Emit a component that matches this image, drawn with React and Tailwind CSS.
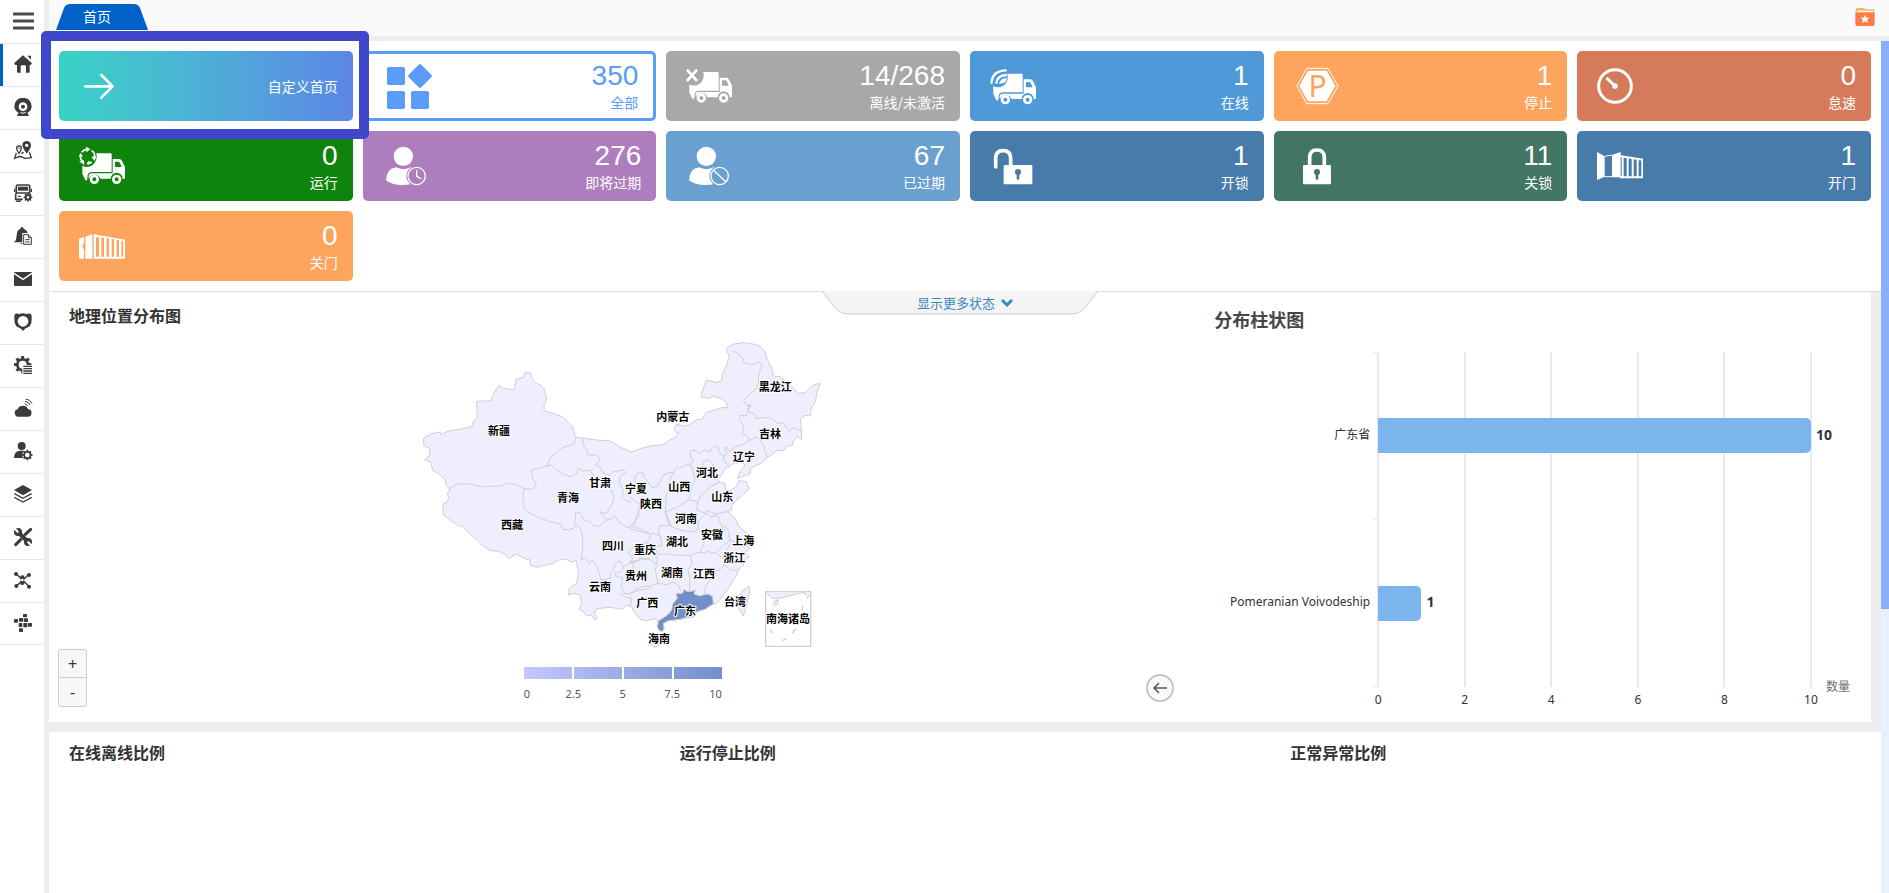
import React from 'react';

const DARK = '#3b3b3b';

// ---------- sidebar icons, 54 x 54 grid ----------

function Gear({ cx, cy, r, hole, color = DARK, teeth = 8 }) {
  const step = 360 / teeth;
  return (
    <g>
      <circle cx={cx} cy={cy} r={(r + hole) / 2} fill="none" stroke={color} strokeWidth={r - hole} />
      {Array.from({ length: teeth }, (_, i) => (
        <rect
          key={i}
          x={cx - r * 0.22}
          y={cy - r * 1.3}
          width={r * 0.44}
          height={r * 0.5}
          fill={color}
          transform={`rotate(${i * step} ${cx} ${cy})`}
        />
      ))}
    </g>
  );
}

const menuItems = [
  {
    name: '首页',
    icon: (
      <g fill={DARK}>
        <path d="M27 1 L54 25 L50 30 H47 V50 Q47 53 44 53 H36 V34 Q36 31 33 31 H23 Q20 31 20 34 V53 H12 Q9 53 9 50 V30 H4 L0 25Z" />
        <path d="M40 2 H51 V14Z" />
      </g>
    ),
  },
  {
    name: '视频',
    icon: (
      <g fill={DARK}>
        <path fillRule="evenodd" d="M27 0 A24 24 0 0 1 40 45 L44 50 V54 H10 V50 L14 45 A24 24 0 0 1 27 0Z M27 13 A13 13 0 1 0 27 39 A13 13 0 1 0 27 13Z" />
        <circle cx="27" cy="26" r="6" />
        <path d="M19 43 Q27 49 35 43" stroke="#fff" strokeWidth="3" fill="none" />
      </g>
    ),
  },
  {
    name: '地图',
    icon: (
      <g>
        <path d="M38 0 A13 13 0 0 1 51 13 Q50 24 38 38 Q27 24 25 13 A13 13 0 0 1 38 0Z" fill={DARK} />
        <circle cx="38" cy="13" r="5" fill="#fff" />
        <path d="M15 15 A7 7 0 0 1 22 22 Q21 29 15 37 Q9 29 8 22 A7 7 0 0 1 15 15Z" fill="none" stroke={DARK} strokeWidth="4" />
        <circle cx="15" cy="22" r="2" fill={DARK} />
        <path d="M7 36 L2 52 L17 46 L34 52 L52 50 L46 34 M22 38 L29 34" fill="none" stroke={DARK} strokeWidth="4" />
      </g>
    ),
  },
  {
    name: '车辆',
    icon: (
      <g>
        <path d="M7 30 V7 Q7 3 11 3 H43 Q47 3 47 7 V28 M5 30 V46 H26" fill="none" stroke={DARK} strokeWidth="5" />
        <rect x="12" y="8" width="30" height="12" fill={DARK} />
        <path d="M5 27 H48 M2 14 V24 M52 14 V24 M12 37 H20 M9 48 V52 H18 V48" stroke={DARK} strokeWidth="4" fill="none" />
        <Gear cx={42} cy={40} r={10} hole={4} />
      </g>
    ),
  },
  {
    name: '报警',
    icon: (
      <g>
        <path d="M19 5 Q20 0 24 0 Q28 0 29 5 Q42 10 42 26 V46 H0 Q8 39 8 26 Q8 10 19 5Z M18 48 H30 Q24 55 18 48Z" fill={DARK} />
        <path d="M27 20 H44 L54 30 V54 H27Z" fill="#fff" stroke="#fff" strokeWidth="4" />
        <path d="M29 23 H43 L52 32 V52 H29Z M43 23 V32 H52 M34 38 H47 M34 45 H47" fill="#fff" stroke={DARK} strokeWidth="3" />
      </g>
    ),
  },
  {
    name: '消息',
    icon: (
      <g>
        <rect x="0" y="6" width="54" height="42" rx="3" fill={DARK} />
        <path d="M0 10 L27 28 L54 10" fill="none" stroke="#fff" strokeWidth="4" />
      </g>
    ),
  },
  {
    name: '围栏',
    icon: (
      <g>
        <path d="M5 2 Q10 0 16 3 Q27 -2 38 3 Q44 0 49 2 Q54 4 53 17 Q54 30 47 40 L33 47 L27 54 L21 47 L7 40 Q0 30 1 17 Q0 4 5 2Z" fill={DARK} />
        <circle cx="27" cy="25" r="16" fill="#fff" />
      </g>
    ),
  },
  {
    name: '设置',
    icon: (
      <g>
        <Gear cx={26} cy={26} r={20} hole={12} />
        <rect x="25" y="27" width="30" height="28" fill="#fff" />
        <path d="M28 31 H54 M28 38 H54 M28 45 H54 M28 52 H54" stroke={DARK} strokeWidth="4" />
      </g>
    ),
  },
  {
    name: '云服务',
    icon: (
      <g>
        <path d="M16 53 A11 11 0 0 1 11 31 Q14 20 27 20 Q38 20 42 30 A11 11 0 0 1 40 53Z" fill={DARK} />
        <path d="M32 14 Q38 15 40 21 M33 7 Q44 8 48 18 M35 1 Q49 1 54 14" fill="none" stroke={DARK} strokeWidth="3" />
      </g>
    ),
  },
  {
    name: '用户',
    icon: (
      <g>
        <circle cx="23" cy="12" r="12" fill={DARK} />
        <path d="M0 48 Q0 28 16 26 H30 Q22 36 27 48Z" fill={DARK} />
        <Gear cx={40} cy={39} r={12} hole={7} />
      </g>
    ),
  },
  {
    name: '图层',
    icon: (
      <g>
        <path d="M27 0 L54 15 L27 31 L0 15Z" fill={DARK} />
        <path d="M1 26 L27 40 L53 26 M1 37 L27 51 L53 37" fill="none" stroke={DARK} strokeWidth="4" />
      </g>
    ),
  },
  {
    name: '工具',
    icon: (
      <g>
        <path d="M50 4 L34 19 M20 35 L5 50" stroke={DARK} strokeWidth="9" strokeLinecap="round" />
        <path d="M15 15 L39 39" stroke={DARK} strokeWidth="13" />
        <circle cx="12" cy="12" r="12" fill={DARK} />
        <circle cx="42" cy="42" r="12" fill={DARK} />
        <path d="M0 -1 L11 11 M54 55 L43 43" stroke="#fff" strokeWidth="7" strokeLinecap="round" />
      </g>
    ),
  },
  {
    name: '网络',
    icon: (
      <g fill={DARK}>
        <path d="M6 8 L45 46 M45 10 L7 46 M25 18 V38" stroke={DARK} strokeWidth="4" />
        <circle cx="6" cy="9" r="6" />
        <circle cx="45" cy="12" r="6" />
        <circle cx="7" cy="45" r="6" />
        <circle cx="45" cy="47" r="6" />
        <circle cx="25" cy="20" r="7" />
        <circle cx="25" cy="35" r="7" />
        <circle cx="25" cy="27" r="4" fill="#fff" />
      </g>
    ),
  },
  {
    name: '应用',
    icon: (
      <g fill={DARK}>
        <rect x="27" y="0" width="12" height="10" rx="2" />
        <rect x="15" y="12" width="13" height="11" rx="2" />
        <rect x="30" y="13" width="12" height="11" rx="2" />
        <rect x="0" y="15" width="12" height="11" rx="2" />
        <rect x="14" y="27" width="11" height="12" rx="2" />
        <rect x="28" y="27" width="12" height="13" rx="2" />
        <rect x="42" y="27" width="12" height="11" rx="2" />
        <rect x="15" y="43" width="12" height="11" rx="2" />
      </g>
    ),
  },
];

// ---------- card icons, 138 x 138 grid ----------

function Truck({ dy = 0, children }) {
  return (
    <g fill="#fff">
      <g transform={`translate(0 ${dy})`}>
        <path d="M52 31 H95 Q98 31 98 34 V87 H40 Q28 87 26 97 L24 113 Q17 112 16 105 L10 92 V68 Q24 76 40 67 Q57 54 52 31Z" />
        <path
          fillRule="evenodd"
          d="M29 106 V98 Q30 91 38 91 H101 V48 H122 Q127 49 129 54 L138 72 V107 H131 A18 18 0 0 0 95 107 H64 A18 18 0 0 0 30 107Z M108 56 H120 L127 68 V72 H108Z"
        />
        <circle cx="46" cy="109" r="10" fill="none" stroke="#fff" strokeWidth="8" />
        <circle cx="113" cy="109" r="10" fill="none" stroke="#fff" strokeWidth="8" />
      </g>
      {children}
    </g>
  );
}

function Person({ bg, children }) {
  return (
    <g transform="translate(9 0)">
      <circle cx="52" cy="40" r="29" fill="#fff" />
      <path d="M0 112 Q2 76 30 73 Q52 84 74 73 Q96 76 100 112 Q80 126 50 126 Q16 126 0 112Z" fill="#fff" />
      <circle cx="92" cy="99" r="31" fill={bg} />
      <circle cx="92" cy="99" r="26" fill={bg} stroke="#fff" strokeWidth="4" />
      {children}
    </g>
  );
}

function Keyhole({ x, color }) {
  return (
    <g fill={color}>
      <circle cx={x} cy="87" r="9" />
      <rect x={x - 4} y="90" width="8" height="20" rx="3" />
    </g>
  );
}

const icons = {
  arrow: (
    <path d="M19 70 H100 M67 36 L101 70 L67 104" fill="none" stroke="#fff" strokeWidth="8" strokeLinecap="round" strokeLinejoin="round" />
  ),
  all: (
    <g fill="#5b9cf8">
      <rect x="3" y="12" width="54" height="54" rx="5" />
      <path d="M98 5 Q102 1 106 5 L136 35 Q139 39 136 43 L106 73 Q102 77 98 73 L68 43 Q65 39 68 35Z" />
      <rect x="3" y="84" width="54" height="54" rx="5" />
      <rect x="75" y="84" width="54" height="54" rx="5" />
    </g>
  ),
  offline: (
    <Truck dy={-4}>
      <path d="M3 20 L33 54 M33 20 L3 54" stroke="#fff" strokeWidth="8" />
    </Truck>
  ),
  online: (
    <Truck dy={1}>
      <path d="M4 62 Q6 22 50 22 M19 62 Q20 37 50 36" fill="none" stroke="#fff" strokeWidth="7" />
      <path d="M27 62 Q32 45 50 46 Q50 62 27 62Z" />
    </Truck>
  ),
  parking: (
    <g>
      <path d="M38 16 H102 L132 69 L102 122 H38 L9 69Z" fill="none" stroke="#fff" strokeWidth="3" />
      <path d="M42 23 H98 L124 69 L98 115 H42 L16 69Z" fill="#fff" />
      <text x="71" y="101" textAnchor="middle" fontSize="90" fill="#fda55f" fontFamily="Noto Sans, sans-serif">P</text>
    </g>
  ),
  idle: (
    <g stroke="#fff" strokeLinecap="round">
      <circle cx="54" cy="69" r="49" fill="none" strokeWidth="9" />
      <path d="M31 47 L54 69" strokeWidth="9" />
      <circle cx="54" cy="69" r="6" fill="#fff" strokeWidth="5" />
    </g>
  ),
  moving: (
    <Truck>
      <g fill="none" stroke="#fff" strokeWidth="5">
        <path d="M8 28 A21 21 0 0 1 24 19 M38 22 A21 21 0 0 1 46 44 M38 57 A21 21 0 0 1 24 61 M10 55 A21 21 0 0 1 4 38" />
      </g>
      <path d="M20 11 L34 18 L23 28Z M37 42 L52 40 L47 54Z M27 53 L26 66 L38 60Z M0 55 L15 52 L16 66Z M0 42 L4 30 L12 40Z" />
    </Truck>
  ),
  expiring: (
    <Person bg="#ae7dbe">
      <path d="M92 82 V100 L105 107" fill="none" stroke="#fff" strokeWidth="4" />
    </Person>
  ),
  expired: (
    <Person bg="#69a0d0">
      <path d="M73 81 L111 117" stroke="#fff" strokeWidth="4" />
    </Person>
  ),
  unlock: (
    <g>
      <path d="M17 72 V46 Q17 23 39 23 Q62 23 62 46 V68" fill="none" stroke="#fff" strokeWidth="11" strokeLinecap="round" />
      <rect x="41" y="66" width="86" height="58" rx="3" fill="#fff" />
      <Keyhole x={84} color="#477baa" />
    </g>
  ),
  lock: (
    <g>
      <path d="M47 70 V44 Q47 21 69 21 Q91 21 91 44 V70" fill="none" stroke="#fff" strokeWidth="11" />
      <rect x="27" y="66" width="84" height="58" rx="3" fill="#fff" />
      <Keyhole x={69} color="#427566" />
    </g>
  ),
  doorOpen: (
    <g>
      <path d="M0 27 L23 40 V101 L0 111Z M45 36 L71 27 V103 H45Z" fill="#fff" />
      <path d="M23 40 L45 36 M23 101 H50" stroke="#fff" strokeWidth="3" />
      <path d="M68 39 L137 50 V103 H68 M77 42 V103 M92 44 V103 M107 46 V103 M122 48 V103 M136 50 V103" fill="none" stroke="#fff" strokeWidth="6" />
    </g>
  ),
  doorClosed: (
    <g>
      <path d="M0 47 L15 42 V60 L11 64 V76 L15 79 V107 H0Z M19 41 L40 34 V107 H19Z" fill="#fff" />
      <path
        fillRule="evenodd"
        d="M44 34 L138 50 V107 H44Z M51 43 H60 V101 H51Z M67 44 H75 V101 H67Z M83 46 H90 V101 H83Z M98 48 H105 V101 H98Z M113 51 H120 V101 H113Z M127 53 H132 V101 H127Z"
        fill="#fff"
      />
    </g>
  ),
};

const cards = [
  { label: '自定义首页', icon: 'arrow', style: 'bg-linear-to-r from-[#37d3c5] to-[#5b86e5] text-white', featured: true },
  { value: '350', label: '全部', icon: 'all', style: 'border-3 border-[#5b9cf8] bg-white text-[#5b9cf8]' },
  { value: '14/268', label: '离线/未激活', icon: 'offline', style: 'bg-[#a8a8a8] text-white' },
  { value: '1', label: '在线', icon: 'online', style: 'bg-[#4f99d9] text-white' },
  { value: '1', label: '停止', icon: 'parking', style: 'bg-[#fda55f] text-white' },
  { value: '0', label: '怠速', icon: 'idle', style: 'bg-[#d57a5b] text-white' },
  { value: '0', label: '运行', icon: 'moving', style: 'bg-[#0e840c] text-white' },
  { value: '276', label: '即将过期', icon: 'expiring', style: 'bg-[#ae7dbe] text-white' },
  { value: '67', label: '已过期', icon: 'expired', style: 'bg-[#69a0d0] text-white' },
  { value: '1', label: '开锁', icon: 'unlock', style: 'bg-[#477baa] text-white' },
  { value: '11', label: '关锁', icon: 'lock', style: 'bg-[#427566] text-white' },
  { value: '1', label: '开门', icon: 'doorOpen', style: 'bg-[#477baa] text-white' },
  { value: '0', label: '关门', icon: 'doorClosed', style: 'bg-[#fda55f] text-white' },
];

function StatusCard({ card }) {
  return (
    <div className="relative">
      <button className={`flex h-[70px] w-full items-center justify-between rounded-[5px] pl-5 pr-[15px] ${card.style}`}>
        <svg viewBox="0 0 138 138" className="size-[46px]" aria-hidden="true">
          {icons[card.icon]}
        </svg>
        <span className="flex flex-col items-end">
          {card.value && <span className="font-['Liberation_Sans',sans-serif] text-[28px] leading-8">{card.value}</span>}
          <span className="text-sm leading-5">{card.label}</span>
        </span>
      </button>
      {card.featured && (
        <div className="pointer-events-none absolute -bottom-[18px] -left-[18px] -right-4 -top-5 z-10 rounded-[5px] border-10 border-[#3f48cc]" />
      )}
    </div>
  );
}

// ---------- map ----------

const outline =
  'M346 126 L362 128 364 142 372 152 380 160 392 166 402 176 404 190 410 200 408 214 402 226 402 242 416 246 440 254 456 260 468 270 476 280 488 290 492 306 498 322 518 324 560 330 596 332 614 340 630 352 648 358 664 366 690 356 720 348 760 344 776 332 790 325 803 314 805 308 796 306 792 296 800 282 820 288 838 284 850 276 864 268 876 268 890 246 915 240 940 232 952 234 948 215 932 206 910 198 895 206 872 200 880 175 890 150 922 158 936 150 936 135 950 105 958 78 950 62 950 55 970 42 1000 38 1030 42 1050 48 1065 66 1070 84 1085 115 1090 138 1110 140 1132 160 1150 175 1165 190 1185 188 1210 165 1230 160 1222 185 1216 215 1204 235 1202 258 1185 256 1170 268 1172 280 1175 305 1174 330 1164 320 1150 332 1148 345 1130 350 1122 362 1100 362 1085 375 1072 382 1055 400 1040 405 1022 415 1020 432 1000 438 982 445 990 425 1005 405 995 395 970 400 958 410 945 415 932 440 918 445 930 456 945 462 947 478 960 482 980 470 985 452 1010 455 1018 478 1000 492 985 505 965 525 965 540 948 545 960 550 975 565 988 590 1010 610 1028 632 1015 645 1000 640 1020 655 1005 668 1018 680 1004 690 1000 705 985 720 978 738 965 760 945 790 920 820 910 822 885 838 860 845 850 860 810 868 775 872 760 880 762 895 754 905 742 890 744 876 735 866 710 872 690 868 676 850 664 830 650 826 636 838 600 832 560 836 554 850 562 866 552 868 545 855 530 858 520 845 508 838 515 820 510 795 492 790 475 795 478 775 500 760 505 730 500 700 498 690 486 698 470 688 450 688 430 700 402 706 380 712 362 706 360 690 340 684 320 672 296 686 284 672 264 664 240 662 210 640 190 620 174 606 160 590 146 588 124 572 102 556 98 540 100 520 112 516 116 500 112 490 120 478 108 466 104 446 86 432 68 420 62 396 44 390 60 376 58 354 42 348 40 326 60 312 90 306 92 314 112 304 150 298 186 290 190 274 202 262 200 214 244 212 246 200 266 166 278 174 312 180 318 148 340 142Z';

// province borders west of 105°E
const westBorders =
  'M116 478 L146 460 156 462 186 462 200 468 230 470 272 468 290 460 320 464 342 476 358 478 372 474 378 458 368 446 364 420 410 408 414 400 424 380 438 370 455 354 492 342 496 324 M342 476 L338 500 342 520 342 536 360 550 380 560 420 575 450 582 460 598 475 600 492 594 498 584 512 596 518 620 518 660 514 690 524 684 M410 408 L424 406 440 420 460 434 486 440 500 430 504 416 520 424 540 420 552 440 M518 324 L522 350 532 362 530 374 560 376 568 384 566 396 556 404 570 412 580 430 600 436 608 426 640 420 646 428 630 440 628 460 640 480 636 500 648 512 664 516 M602 476 L612 500 608 520 596 540 590 550 568 545 580 556 588 572 570 588 552 588 540 574 524 572 510 548 498 546 494 584 M588 572 L596 564 602 570 612 556 630 580 650 592 670 590 676 570 688 540 M670 590 L700 600 720 612 M720 640 L690 645 664 655 656 670 668 684 664 694 690 690 720 684 M524 684 L536 700 548 690 560 710 574 750 590 748 600 744 602 728 612 716 616 700 630 692 640 712 664 694 M640 712 L630 726 614 730 620 740 638 744 634 770 644 790 660 792 M630 790 L644 800 666 806 660 828 M664 694 L672 714 M660 790 L690 780 720 776';

// province borders of the eastern half
const eastBorders =
  'M305 66 L318 66 340 84 342 98 366 104 385 96 398 104 390 120 385 140 386 160 375 180 360 190 340 212 356 230 362 226 352 244 346 258 330 256 330 272 338 282 342 300 335 310 352 318 360 332 335 345 315 350 300 365 290 352 284 352 290 372 282 378 270 370 262 348 246 352 240 366 222 360 206 370 196 360 182 362 180 378 190 396 180 402 155 412 140 412 132 426 104 432 95 445 80 470 66 474 58 460 40 440 38 428 25 428 15 440 16 460 M352 244 L372 250 380 265 415 262 432 270 440 278 460 280 478 304 488 295 500 295 515 305 M360 332 L375 320 385 325 400 345 412 382 M282 378 L280 390 296 408 M182 402 L188 420 196 450 184 470 178 510 M215 415 L220 396 234 388 248 402 252 420 M132 426 L118 450 116 480 108 500 106 546 M106 546 L140 532 178 510 206 516 M270 456 L240 470 228 484 212 498 204 516 200 540 228 550 M0 500 L15 515 28 520 26 560 10 580 0 590 M106 546 L112 570 120 588 92 586 84 600 90 618 64 608 M0 595 L30 604 64 612 56 630 40 645 20 648 M106 546 L124 590 150 600 190 606 204 598 M228 550 L206 572 204 598 218 616 222 640 210 668 M228 550 L240 560 262 556 272 580 280 600 294 600 300 630 278 650 260 668 246 670 226 662 M228 550 Q232 536 244 548 L262 552 285 545 M278 590 Q288 584 292 596 M300 630 L320 640 340 640 M300 640 L290 660 282 680 284 705 300 720 325 720 M90 618 L96 646 76 650 82 672 110 672 140 676 180 676 200 668 226 668 M76 672 L82 690 76 720 84 760 110 764 130 756 146 768 152 782 M180 676 L186 700 174 720 180 750 178 782 M284 705 L268 720 250 724 240 750 226 770 224 792 M0 700 L20 696 30 684 56 688 78 700 M0 792 L20 776 40 770 60 768 84 760 M352 228 L362 224 358 236 350 236 M262 672 L280 684';

const guangdong =
  'M162 778 L170 784 185 784 196 780 192 792 210 798 222 794 235 792 248 800 250 822 236 830 225 838 200 845 190 860 170 862 150 868 115 872 100 880 102 895 98 904 88 902 82 890 86 872 105 860 118 850 125 840 128 822 142 805 138 790 158 790Z';

const provinces = [
  ['新疆', 267, 304], ['西藏', 306, 586], ['青海', 474, 504], ['甘肃', 570, 460],
  ['宁夏', 678, 477], ['四川', 609, 648], ['云南', 570, 772], ['贵州', 678, 738],
  ['黑龙江', 1096, 171], ['内蒙古', 788, 260], ['吉林', 1080, 313], ['辽宁', 1002, 381],
  ['河北', 891, 430], ['山西', 808, 472], ['山东', 937, 502], ['陕西', 723, 522],
  ['河南', 828, 568], ['安徽', 906, 616], ['上海', 1000, 632], ['湖北', 801, 637],
  ['重庆', 705, 661], ['浙江', 973, 684], ['湖南', 786, 730], ['江西', 882, 732],
  ['广西', 712, 820], ['广东', 825, 842], ['台湾', 975, 815], ['海南', 747, 928],
  ['南海诸岛', 1134, 868],
];

function ChinaMap() {
  return (
    <svg viewBox="0 0 1320 990" className="h-[330px] w-[440px]" role="img" aria-label="地理位置分布图">
      <g fill="#efeeff" stroke="#cfcfd2" strokeWidth="3" strokeLinejoin="round">
        <path d={outline} />
        <path d={westBorders} fill="none" />
        <g transform="translate(660 0)">
          <path d={eastBorders} fill="none" />
          <path d={guangdong} fill="#728fc9" />
          <path d="M355 770 L360 774 356 800 348 830 340 858 332 845 318 825 320 808 335 785Z" />
          <path d="M62 925 L84 918 94 930 86 948 74 952 60 944Z" />
          <path d="M410 788 L424 804 440 806 470 800 500 792 520 787 530 796 526 787" />
          <path d="M432 814 L445 810 442 824 432 826Z" />
          <path d="M539 792 L530 806 M518 828 L516 842 M418 848 L417 862 M420 898 L427 910 M498 896 L486 910 M456 932 L470 926" fill="none" strokeWidth="4" />
          <rect x="407" y="785" width="135" height="164" fill="none" strokeWidth="4" />
        </g>
      </g>
      <g
        fontSize="33"
        fontWeight="700"
        fontFamily="Noto Sans CJK SC, sans-serif"
        textAnchor="middle"
        stroke="#fff"
        strokeWidth="6"
        strokeLinejoin="round"
        paintOrder="stroke"
      >
        {provinces.map(([name, x, y]) => (
          <text key={name} x={x} y={y + 12}>{name}</text>
        ))}
      </g>
    </svg>
  );
}

function MapPanel() {
  return (
    <section className="relative w-3/5">
      <h2 className="px-5 pb-[3px] pt-[11px] text-base font-bold leading-6 text-[#333]">地理位置分布图</h2>
      <div className="pl-[33%]">
        <ChinaMap />
        <div className="ml-[114px] mt-[7px] w-[198px]">
          <div className="grid h-3 grid-cols-4 gap-0.5">
            <div className="bg-linear-to-r from-[#c3c9ff] to-[#afbaf1]" />
            <div className="bg-linear-to-r from-[#afbaf1] to-[#9bace3]" />
            <div className="bg-linear-to-r from-[#9bace3] to-[#879dd6]" />
            <div className="bg-linear-to-r from-[#879dd6] to-[#728fc9]" />
          </div>
          <div className="mt-[7px] flex justify-between font-['Noto_Sans',sans-serif] text-[11px] leading-4 text-[#555]">
            <span className="w-6">0</span>
            <span className="w-12 text-center">2.5</span>
            <span className="w-12 text-center">5</span>
            <span className="w-12 text-center">7.5</span>
            <span className="w-6 text-right">10</span>
          </div>
        </div>
      </div>
      <div className="absolute bottom-[15px] left-[9px] flex w-[29px] flex-col divide-y divide-[#ccc] rounded-[3px] border border-[#ccc] bg-[#f7f7f7] font-['Noto_Sans',sans-serif] text-base text-[#333]">
        <button className="h-7 leading-7" aria-label="放大">+</button>
        <button className="h-7 leading-7" aria-label="缩小">-</button>
      </div>
    </section>
  );
}

// ---------- bar chart ----------

const bars = [
  { name: '广东省', value: 10 },
  { name: 'Pomeranian Voivodeship', value: 1 },
];
const ticks = [0, 2, 4, 6, 8, 10];

function ChartPanel() {
  return (
    <section className="relative grid w-2/5 grid-cols-[236px_1fr_60px] grid-rows-[60px_335px_35px] font-['Noto_Sans','Noto_Sans_CJK_SC',sans-serif] text-xs text-[#333]">
      <h2 className="col-span-3 pl-[72px] pt-[15px] text-lg font-bold leading-[26px] text-[#464646]">分布柱状图</h2>
      <div className="grid grid-rows-2 pr-2 text-right">
        {bars.map((bar) => (
          <span key={bar.name} className="self-center pb-0.5">{bar.name}</span>
        ))}
      </div>
      <div className="relative">
        <div className="absolute inset-0 -mx-px flex justify-between">
          {ticks.map((t) => (
            <div key={t} className="w-0.5 bg-[#e8e9f0]" />
          ))}
        </div>
        <div className="absolute inset-y-0 -left-1 flex w-1 flex-col justify-between">
          <div className="h-px bg-[#e0e6f1]" />
          <div className="h-px bg-[#e0e6f1]" />
          <div className="h-px bg-[#e0e6f1]" />
        </div>
        <div className="relative grid h-full grid-rows-2">
          {bars.map((bar) => (
            <div key={bar.name} className="relative flex items-center">
              <div className="h-[35px] shrink-0 rounded-r-[5px] bg-[#7cb4ec]" style={{ width: `${bar.value * 10}%` }} />
              <span className="ml-[5px] pb-0.5 text-sm font-bold">{bar.value}</span>
            </div>
          ))}
        </div>
      </div>
      <span className="-mb-2 self-end pl-[15px] text-[#6e7079]">数量</span>
      <div className="col-start-2 -mx-4 flex justify-between leading-[26px]">
        {ticks.map((t) => (
          <span key={t} className="w-8 text-center">{t}</span>
        ))}
      </div>
      <button
        className="absolute bottom-5 left-1 flex size-7 items-center justify-center rounded-full border-2 border-[#c6c6c6] bg-[#fafafa]"
        aria-label="收起"
      >
        <svg viewBox="0 0 16 16" className="size-4" fill="none" stroke="#555" strokeWidth="1.5">
          <path d="M15 8 H2 M7 3 L2 8 L7 13" />
        </svg>
      </button>
    </section>
  );
}

function Sidebar() {
  return (
    <nav className="w-[49px] shrink-0 border-r-5 border-[#ededed] bg-white">
      <button className="flex h-[43px] w-full items-center justify-center pb-0.5 pl-0.5" aria-label="菜单">
        <svg viewBox="0 0 21 18" className="h-[18px] w-[21px]" stroke="#4a4a4a" strokeWidth="3" strokeLinecap="round">
          <path d="M1 2 H20 M1 9 H20 M1 16 H20" />
        </svg>
      </button>
      {menuItems.map((item, i) => (
        <a
          key={item.name}
          href="#"
          aria-label={item.name}
          className={`relative flex h-[43px] items-center justify-center border-t border-[#e6e8f0] pb-0.5 pl-0.5 ${i === menuItems.length - 1 ? 'border-b' : ''}`}
        >
          {i === 0 && <span className="absolute inset-y-0 left-0 w-[3px] bg-[#0062c8]" />}
          <svg viewBox="0 0 54 54" className="size-[18px] overflow-visible">{item.icon}</svg>
        </a>
      ))}
    </nav>
  );
}

function TopBar() {
  return (
    <header className="flex h-[41px] items-start justify-between border-b-5 border-[#ededed] bg-[#fafafa] pl-[7px] pr-3.5">
      <button className="relative mt-1 h-[26px] w-[92px] pb-0.5 pr-2.5 text-sm leading-5 text-white">
        <svg viewBox="0 0 92 26" preserveAspectRatio="none" className="absolute inset-0 size-full" fill="#0062c8">
          <path d="M0 26 L8 4 Q10 0 14 0 H78 Q82 0 84 4 L92 26Z" />
        </svg>
        <span className="relative">首页</span>
      </button>
      <button className="mt-2" aria-label="收藏">
        <svg viewBox="0 0 60 54" className="h-[18px] w-5">
          <path d="M3 12 V4 Q3 0 7 0 H24 L31 4 H54 Q58 4 58 8 V14Z" fill="#f9b04f" />
          <rect x="6" y="8" width="49" height="8" fill="#fff" />
          <path d="M1 13 H59 V48 Q59 54 53 54 H7 Q1 54 1 48Z" fill="#ff7a45" />
          <path d="M30 20 L34 29 43 29 36 36 39 45 30 40 21 45 24 36 17 29 26 29Z" fill="#fff" />
        </svg>
      </button>
    </header>
  );
}

function App() {
  return (
    <div className="flex h-screen overflow-hidden bg-[#ededed] font-['Noto_Sans_CJK_SC',sans-serif]">
      <Sidebar />
      <div className="flex min-w-0 grow flex-col">
        <TopBar />
        <div className="flex min-h-0 grow">
          <main className="flex min-w-0 grow flex-col">
            <div className="grid grid-cols-6 gap-2.5 border-b border-[#dcdcdc] bg-white p-2.5">
              {cards.map((card) => (
                <StatusCard key={card.label} card={card} />
              ))}
            </div>
            <div className="relative mr-2.5 flex bg-white">
              <button className="absolute -top-px left-1/2 z-10 h-6 w-[278px] -translate-x-1/2 text-[13px] text-[#3a8ac0]">
                <svg viewBox="0 0 278 24" preserveAspectRatio="none" className="absolute inset-0 size-full">
                  <path d="M1 0 L15 18 Q20 23 27 23 H251 Q258 23 263 18 L277 0" fill="#f4f4f4" stroke="#ccc" />
                </svg>
                <span className="relative flex h-full items-center justify-center gap-1.5 pl-2.5">
                  显示更多状态
                  <svg viewBox="0 0 12 8" className="h-2 w-3" fill="none" stroke="currentColor" strokeWidth="3">
                    <path d="M1 1 L6 6 L11 1" />
                  </svg>
                </span>
              </button>
              <MapPanel />
              <ChartPanel />
            </div>
            <div className="mt-2.5 grid grow grid-cols-3 bg-white text-base font-bold text-[#333]">
              <h2 className="pl-5 pt-2">在线离线比例</h2>
              <h2 className="pl-5 pt-2">运行停止比例</h2>
              <h2 className="pl-5 pt-2">正常异常比例</h2>
            </div>
          </main>
          <div className="w-2 shrink-0 bg-[#e8f0fe]">
            <div className="h-2/3 bg-[#8cadf7]" />
          </div>
        </div>
      </div>
    </div>
  );
}

export default App;
